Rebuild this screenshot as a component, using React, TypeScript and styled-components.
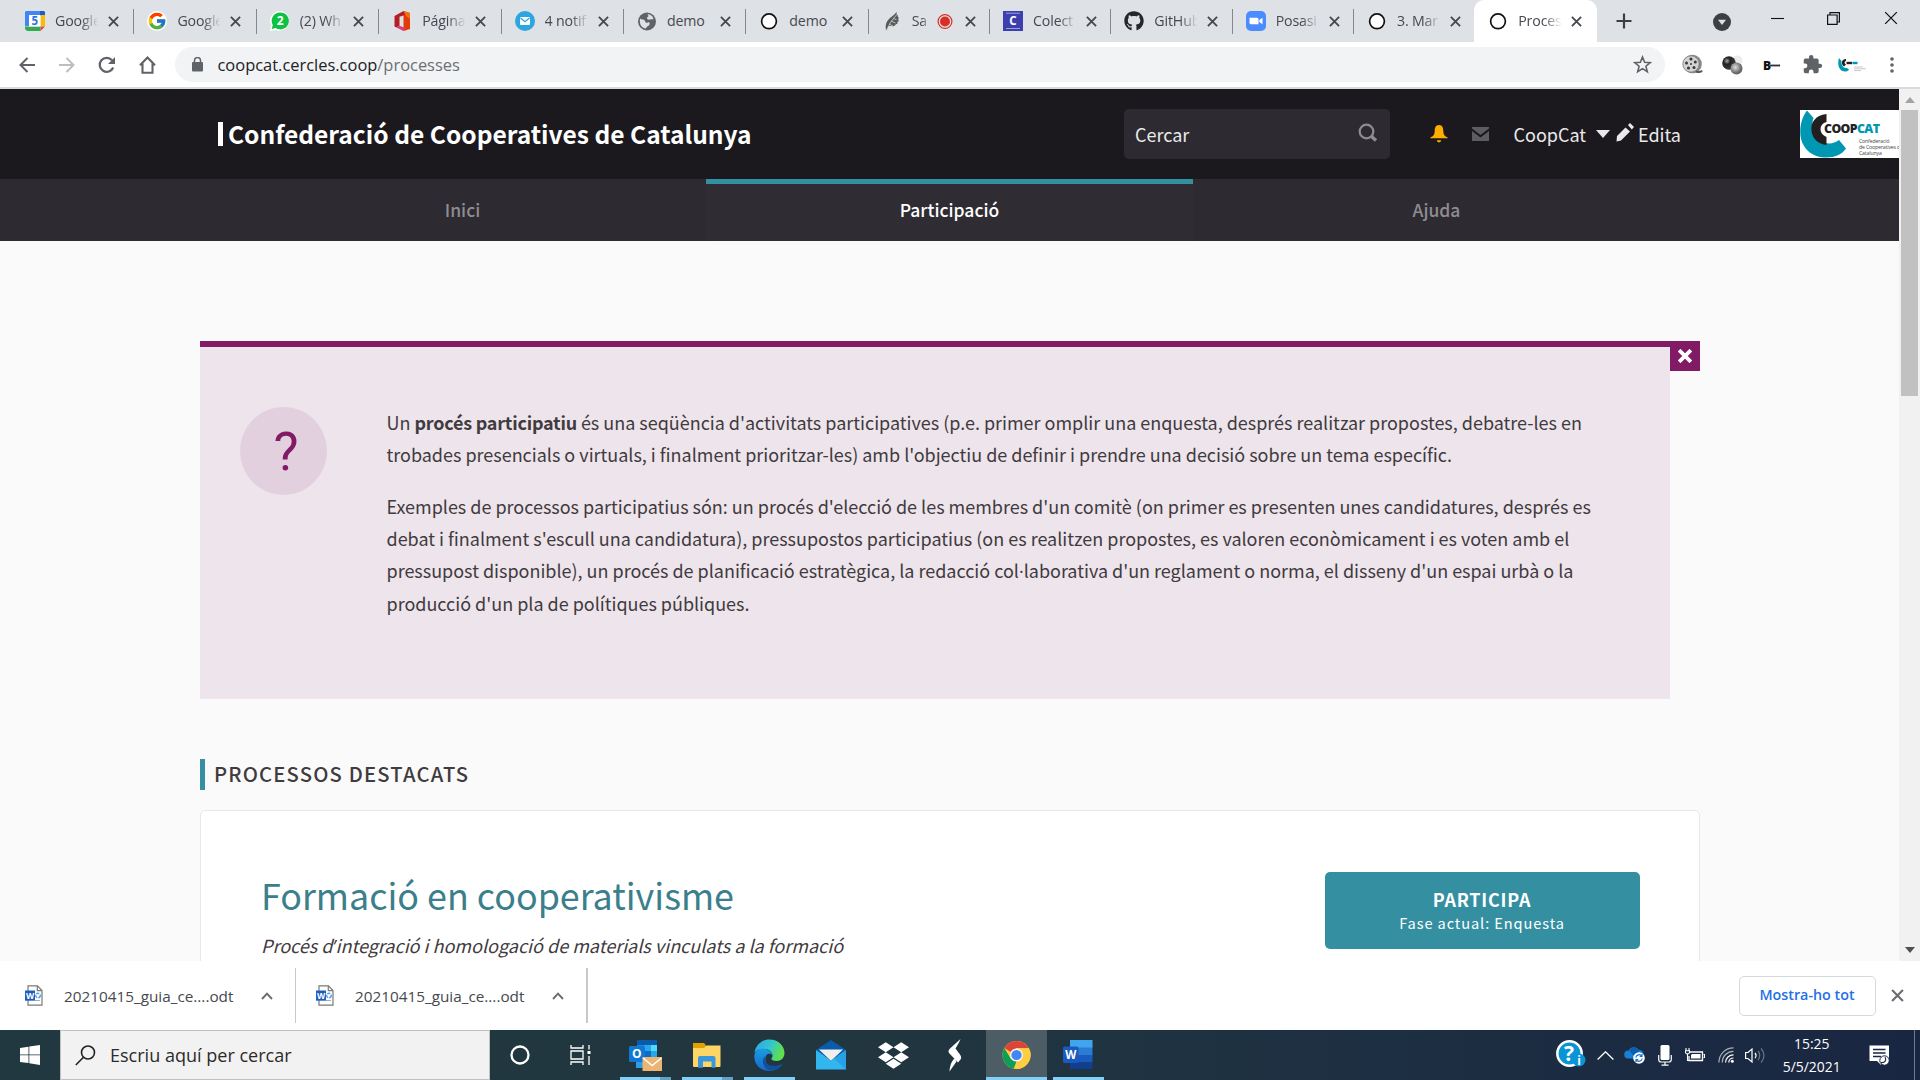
import React from "react";
import styled, { createGlobalStyle, css } from "styled-components";
import { FcGoogle } from "react-icons/fc";
import { FaDropbox, FaGithub } from "react-icons/fa";

const ui = `"Open Sans", "Noto Sans", sans-serif`;
const site = `"Noto Sans CJK SC", "Noto Sans", sans-serif`;
const teal = "#3490a0";
const plum = "#821b66";

const GlobalStyle = createGlobalStyle`
  body { margin: 0; overflow: hidden; }
  * { box-sizing: border-box; }
  svg { display: block; flex: none; }
`;

const Screen = styled.div`
  width: 1920px;
  height: 1080px;
  display: flex;
  flex-direction: column;
  overflow: hidden;
  font-family: ${ui};
`;

/* ---------- tab strip ---------- */
const TabStrip = styled.div`
  height: 42px;
  background: #dee1e6;
  display: flex;
  padding-left: 11px;
`;
const Tab = styled.div<{ $w: number; $active?: boolean; $last?: boolean }>`
  position: relative;
  width: ${(p) => p.$w}px;
  height: 42px;
  padding-left: 14px;
  display: flex;
  align-items: center;
  background: ${(p) => (p.$active ? "#fff" : "transparent")};
  border-radius: ${(p) => (p.$active ? "10px 10px 0 0" : "0")};
  &::after {
    content: "";
    display: ${(p) => (p.$active || p.$last ? "none" : "block")};
    position: absolute;
    right: -1px;
    top: 9px;
    width: 1px;
    height: 25px;
    background: #84878b;
  }
`;
const Favicon = styled.div`
  width: 20px;
  height: 42px;
  flex: none;
  display: flex;
  align-items: center;
  justify-content: center;
`;
const TabTitle = styled.div<{ $w: number; $fade: boolean }>`
  margin-left: 10px;
  width: ${(p) => p.$w}px;
  overflow: hidden;
  white-space: nowrap;
  font-size: 14.2px;
  line-height: 24px;
  letter-spacing: -0.15px;
  color: #45494e;
  ${(p) => p.$fade && css`mask-image: linear-gradient(to right, #000 60%, transparent 102%);`}
`;
const RecordBadge = styled(Favicon)`
  margin-left: 6px;
`;
const TabClose = styled.div`
  position: absolute;
  left: 97px;
  top: 16px;
`;
const NewTab = styled.div`
  width: 54px;
  display: flex;
  align-items: center;
  justify-content: center;
`;
const WindowControls = styled.div`
  margin-left: auto;
  display: flex;
  height: 37px;
`;
const WindowButton = styled.div<{ $w: number; $down?: boolean }>`
  width: ${(p) => p.$w}px;
  height: ${(p) => (p.$down ? 43 : 36)}px;
  display: flex;
  align-items: center;
  justify-content: center;
`;

/* ---------- address toolbar ---------- */
const Toolbar = styled.div`
  height: 47px;
  background: #fff;
  border-bottom: 2px solid #dadbde;
  display: flex;
  align-items: center;
  padding-left: 7px;
`;
const ToolButton = styled.div`
  width: 40px;
  height: 40px;
  display: flex;
  align-items: center;
  justify-content: center;
`;
const AddressBar = styled.div`
  margin-left: 8px;
  margin-right: 7px;
  width: 1490px;
  height: 35px;
  border-radius: 18px;
  background: #f1f3f4;
  display: flex;
  align-items: center;
  padding: 0 13px 0 17px;
`;
const Url = styled.div`
  flex: 1;
  margin-left: 14.5px;
  font-size: 16.45px;
  color: #202124;
  white-space: nowrap;
  span { color: #6b6f74; }
`;

/* ---------- page ---------- */
const Viewport = styled.div`
  height: 872px;
  display: flex;
`;
const Page = styled.div`
  width: 1899px;
  height: 872px;
  overflow: hidden;
  background: #fafafa;
  font-family: ${site};
  color: #3f3b3e;
`;
const Header = styled.header`
  height: 90px;
  background: #1b191e;
  display: flex;
  align-items: center;
  padding-left: 218px;
  color: #e9e9ea;
  font-size: 18px;
  line-height: 24px;
`;
const SiteTitle = styled.div`
  width: 906px;
  display: flex;
  align-items: center;
  gap: 5px;
  font-size: 24.55px;
  font-weight: 700;
  color: #fff;
  white-space: nowrap;
`;
const TitleBar = styled.span`
  width: 5px;
  height: 24px;
  background: #fff;
`;
const SearchBox = styled.div`
  width: 266px;
  height: 50px;
  border-radius: 5px;
  background: #2d2a31;
  display: flex;
  align-items: center;
  justify-content: space-between;
  padding: 0 12px 0 11px;
`;
const HeaderItem = styled.div<{ $gap: number; $w: number }>`
  margin-left: ${(p) => p.$gap}px;
  width: ${(p) => p.$w}px;
  padding-bottom: 1px;
  white-space: nowrap;
`;
const Brand = styled.div`
  margin-left: auto;
  width: 99px;
  height: 48px;
  background: #fff;
  display: flex;
`;
const BrandText = styled.div`
  padding-top: 12px;
  margin-left: -26px;
  width: 75px;
  overflow: hidden;
  white-space: nowrap;
`;
const BrandName = styled.div`
  font: 800 12.3px/14px ${ui};
  letter-spacing: -0.6px;
  color: #222;
  span { color: #0097b2; }
`;
const BrandNote = styled.div`
  margin: 3px 0 0 35px;
  font: 5.2px/5.8px ${ui};
  letter-spacing: -0.15px;
  color: #444;
`;
const Nav = styled.nav`
  height: 62px;
  background: #2d2a31;
  padding: 0 219px;
  display: flex;
`;
const NavLink = styled.div<{ $active?: boolean }>`
  flex: 1;
  border-top: 5px solid ${(p) => (p.$active ? teal : "transparent")};
  background: ${(p) => (p.$active ? "#302c34" : "transparent")};
  background-clip: padding-box;
  padding-bottom: 7px;
  display: flex;
  align-items: center;
  justify-content: center;
  font-size: 17.5px;
  font-weight: 500;
  color: ${(p) => (p.$active ? "#fff" : "#8f8d92")};
`;
const Main = styled.main`
  padding: 100px 199px 0 200px;
`;
const Callout = styled.section`
  display: flex;
  align-items: flex-start;
  height: 358px;
  margin-bottom: 60px;
`;
const CalloutBody = styled.div`
  width: 1470px;
  height: 358px;
  border-top: 6px solid ${plum};
  background: #eee4eb;
  padding: 60px 0 0 40px;
  display: flex;
  align-items: flex-start;
`;
const CalloutClose = styled.div`
  width: 30px;
  height: 30px;
  background: ${plum};
  display: flex;
  align-items: center;
  justify-content: center;
  padding-right: 1px;
`;
const HelpCircle = styled.div`
  width: 87px;
  height: 88px;
  border-radius: 50%;
  background: #e2d0de;
  color: ${plum};
  display: flex;
  justify-content: center;
  font-family: Roboto, sans-serif;
  font-size: 53px;
  line-height: 90px;
  padding-left: 5px;
`;
const CalloutText = styled.div`
  margin: -1px 0 0 59.5px;
  font-size: 17.98px;
  line-height: 32px;
  white-space: nowrap;
  p { margin: 0 0 20px; }
  b { font-weight: 700; letter-spacing: -0.22px; }
  span { font-family: "Open Sans", sans-serif; }
`;
const SectionHeading = styled.h3`
  margin: 0 0 20px;
  height: 31px;
  border-left: 5px solid ${teal};
  padding-left: 9px;
  font-size: 20.2px;
  line-height: 29px;
  font-weight: 500;
  letter-spacing: 1.18px;
`;
const Card = styled.article`
  height: 400px;
  border: 1px solid #e8e8e8;
  border-radius: 5px;
  background: #fff;
  padding: 61px 59px 0 60px;
  display: flex;
  justify-content: space-between;
  align-items: flex-start;
`;
const CardTitle = styled.h2`
  margin: 0;
  font-size: 35.85px;
  line-height: 44px;
  font-weight: 400;
  color: #3a7f8b;
`;
const CardLead = styled.p`
  margin: 13px 0 0;
  font-size: 18px;
  line-height: 32px;
  font-style: italic;
  white-space: nowrap;
  span { font-family: "Open Sans", sans-serif; }
`;
const CardButton = styled.div`
  width: 315px;
  height: 77px;
  border-radius: 5px;
  background: ${teal};
  color: #fff;
  text-align: center;
  padding: 16px 1px 0 0;
`;
const ButtonTitle = styled.div`
  font-size: 17.9px;
  line-height: 23px;
  font-weight: 700;
  letter-spacing: 0.8px;
`;
const ButtonNote = styled.div`
  font-size: 14.6px;
  line-height: 23px;
  letter-spacing: 0.9px;
`;
const Scrollbar = styled.div`
  width: 21px;
  background: #f1f1f1;
  display: flex;
  flex-direction: column;
  align-items: center;
  justify-content: space-between;
`;
const ScrollTop = styled.div`
  display: flex;
  flex-direction: column;
  align-items: center;
`;
const ScrollArrow = styled.div<{ $h: number }>`
  height: ${(p) => p.$h}px;
  display: flex;
  align-items: center;
`;
const ScrollThumb = styled.div`
  width: 17px;
  height: 286px;
  background: #c1c1c1;
`;

/* ---------- downloads shelf ---------- */
const Shelf = styled.div`
  height: 69px;
  background: #fff;
  display: flex;
  align-items: center;
`;
const Download = styled.div<{ $gap: number; $w: number; $edge: number }>`
  margin-left: ${(p) => p.$gap}px;
  width: ${(p) => p.$w}px;
  height: 55px;
  border-right: ${(p) => p.$edge}px solid #c8c9cb;
  display: flex;
  align-items: center;
  color: #45494e;
`;
const DownloadName = styled.div`
  width: 170px;
  margin: 0 27px 0 21px;
  font-size: 15.3px;
  white-space: nowrap;
`;
const ShowAll = styled.div`
  margin-left: auto;
  width: 137px;
  height: 40px;
  border: 1px solid #d5d8dc;
  border-radius: 5px;
  display: flex;
  align-items: center;
  justify-content: center;
  padding: 0 1px 2px 0;
  font-size: 14.3px;
  font-weight: 600;
  color: #2470e6;
`;
const ShelfClose = styled.div`
  width: 44px;
  padding-right: 1px;
  display: flex;
  justify-content: center;
`;

/* ---------- taskbar ---------- */
const Taskbar = styled.div`
  height: 50px;
  background: linear-gradient(90deg, #213840 0%, #21363f 45%, #1d2f42 72%, #192642 100%);
  display: flex;
  color: #fff;
`;
const TaskSlot = styled.div<{ $w: number; $active?: boolean }>`
  width: ${(p) => p.$w}px;
  height: 50px;
  flex: none;
  display: flex;
  flex-direction: column;
  align-items: center;
  background: ${(p) => (p.$active ? "#4c5d66" : "transparent")};
`;
const TaskIcon = styled.div`
  height: 47px;
  padding-top: 3px;
  display: flex;
  align-items: center;
`;
const Running = styled.div<{ $w: number; $multi?: boolean }>`
  width: ${(p) => p.$w}px;
  height: 3px;
  background: ${(p) => (p.$multi ? "linear-gradient(90deg, #7fd1fa 0 40px, #62a2c4 40px)" : "#7fd1fa")};
`;
const TaskSearch = styled.div`
  width: 430px;
  height: 50px;
  background: #f2f2f2;
  border: 1px solid #c0c1c2;
  display: flex;
  align-items: center;
  padding-left: 14px;
  gap: 14px;
  font-size: 18.05px;
  color: #2b2b2b;
`;
const Tray = styled.div`
  margin-left: auto;
  display: flex;
  align-items: center;
`;
const TrayItem = styled.div<{ $w: number }>`
  width: ${(p) => p.$w}px;
  height: 50px;
  display: flex;
  align-items: center;
  justify-content: center;
`;
const Clock = styled.div`
  width: 84px;
  text-align: center;
  font-size: 13.9px;
  line-height: 23px;
`;
const ShowDesktop = styled.div`
  width: 6px;
  height: 50px;
  border-left: 1px solid #6f7a8c;
`;

/* ---------- drawings ---------- */
const Cross = ({ s, w, c = "#45494d" }: { s: number; w: number; c?: string }) => (
  <svg width={s} height={s} viewBox="0 0 12 12" stroke={c} strokeWidth={w}>
    <path d="M1 1 11 11M11 1 1 11" />
  </svg>
);

const Ring = () => (
  <svg width="20" height="20" viewBox="0 0 20 20">
    <circle cx="10" cy="10.3" r="7.4" fill="#fff" stroke="#111" strokeWidth="1.7" />
  </svg>
);

const Calendar = () => (
  <svg width="20" height="20" viewBox="0 0 20 20">
    <path fill="#4285f4" d="M1 0h14v4H4v11H0V1z" />
    <path fill="#1a5fd0" d="M15 0h4l1 1v4h-5z" />
    <path fill="#fbbc04" d="M15.500 4H20v11h-4.500z" />
    <path fill="#34a853" d="M1 15.500h14.500V20H2L0 18v-2.500z" />
    <path fill="#ea4335" d="M15.500 15.500H20L15.500 20z" />
    <path fill="#fff" d="M4 4h11.500v11.500H4z" />
    <text x="9.700" y="13.800" fontFamily="Open Sans" fontWeight="700" fontSize="11.500" fill="#2f75e8" textAnchor="middle">5</text>
  </svg>
);

const WhatsApp = () => (
  <svg width="20" height="20" viewBox="0 0 20 20">
    <path fill="#fff" d="M10 0a9.800 9.800 0 0 0-8.800 14.500L0 20l5.300-1.300A9.800 9.800 0 1 0 10 0z" />
    <path fill="#0fc143" d="M10.200 1.400a8.500 8.500 0 0 0-7.400 12.700L1.700 18l4-1a8.500 8.500 0 1 0 4.500-15.600z" />
    <text x="10.300" y="14.300" fontFamily="Open Sans" fontWeight="700" fontSize="12" fill="#fff" textAnchor="middle">2</text>
  </svg>
);

const Office = () => (
  <svg width="20" height="20" viewBox="0 0 20 20">
    <path fill="#e23b0a" d="M11.500 0 18 2v16l-6.500 2z" />
    <path fill="#f0700e" d="M11.500 0 18 2v6l-4-3z" />
    <path fill="#b31d24" d="M2.500 5 11.500 0l1.500 4-5.500 1.800v9L4.500 16.500l-2-1z" />
    <path fill="#d93a7a" d="M4.500 16.500 7.500 14.800 13 17v1l-1.500 2z" />
  </svg>
);

const MailDot = () => (
  <svg width="20" height="20" viewBox="0 0 20 20">
    <circle cx="10" cy="10" r="10" fill="#2ba6e0" />
    <rect x="5" y="6" width="10" height="8" rx="1" fill="#fff" />
    <path d="m5.500 7 4.500 3.700L14.500 7" fill="none" stroke="#2ba6e0" strokeWidth="1.200" />
  </svg>
);

const Globe = () => (
  <svg width="20" height="20" viewBox="0 0 20 20">
    <circle cx="10" cy="10.500" r="9" fill="#5f6368" />
    <path fill="#dee1e6" d="M3 7.500c2 1.500 4.500.5 5 2.500s1.500 2 3 1.500 2 .5 1.500 2-3 1.500-3.500 4c-3.500-.3-7-3-6-10zM10.500 3c3 .5 5 2 6 4.500-1 1.500-2 .5-3.500 1s-3-.2-3-1.500 1.500-1 1.500-2-1-1-1-2z" />
  </svg>
);

const Feather = () => (
  <svg width="20" height="20" viewBox="0 0 20 20">
    <path fill="#5a5a5a" d="M4 19.500c-1-5 0-8.500 3-11.500 2-2.200 4-2.500 7.500-7 .5 3-.3 4 1.500 3-.2 2-.5 2.500 1 2.500-1 2-1 3 0 3.500-2 1-2 2-1.500 3-2.500 0-2 1.500-3.500 2-2.500.7-4-.5-5.500.5z" />
    <path d="M5 19C7 13 10 9 14.500 4M7 13l4 2M9 10l4.500 2M11 7.500l3.500 1" stroke="#cfd1d4" strokeWidth=".8" fill="none" />
  </svg>
);

const Record = () => (
  <svg width="16" height="18" viewBox="0 0 16 18">
    <circle cx="8" cy="9.500" r="6.900" fill="none" stroke="#d93025" strokeWidth="1.200" />
    <circle cx="8" cy="9.500" r="5" fill="#d93025" />
  </svg>
);

const Colectivo = () => (
  <svg width="20" height="20" viewBox="0 0 20 20">
    <path fill="#3d3fae" d="M0 0h20v20H0z" />
    <path d="M3 2.200h14M3 17.500h14" stroke="#a6a8e6" strokeWidth=".9" />
    <text x="10" y="14.200" fontFamily="Open Sans" fontWeight="700" fontSize="11.500" fill="#fff" textAnchor="middle">C</text>
  </svg>
);

const Zoom = () => (
  <svg width="20" height="20" viewBox="0 0 20 20">
    <rect width="20" height="20" rx="5" fill="#4a8cff" />
    <path fill="#fff" d="M3.500 6.800h7.500a1.500 1.500 0 0 1 1.500 1.500v5H5a1.500 1.500 0 0 1-1.500-1.500zM13.300 9l3.200-2.200v6.400L13.300 11z" />
  </svg>
);

const Reel = () => (
  <svg width="21" height="21" viewBox="0 0 21 21">
    <circle cx="10.500" cy="10" r="9.300" fill="#888" />
    <circle cx="9" cy="10" r="8.200" fill="#d2d2d2" stroke="#777" strokeWidth=".8" />
    <g fill="#3a3a3a">
      <circle cx="9" cy="10" r="1" /><circle cx="9" cy="5" r="1.600" /><circle cx="13.300" cy="8" r="1.500" />
      <circle cx="12" cy="13.500" r="1.500" /><circle cx="6.500" cy="14" r="1.600" /><circle cx="4.500" cy="9" r="1.500" />
    </g>
    <path d="M14 17.500c3 1 5 1 6-1" stroke="#555" strokeWidth="2" fill="none" />
  </svg>
);

const Balls = () => (
  <svg width="21" height="20" viewBox="0 0 21 20">
    <defs>
      <radialGradient id="bk" cx=".35" cy=".35"><stop offset="0" stopColor="#aaa" /><stop offset=".5" stopColor="#222" /><stop offset="1" stopColor="#333" /></radialGradient>
      <radialGradient id="gy" cx=".4" cy=".4"><stop offset="0" stopColor="#ddd" /><stop offset="1" stopColor="#666" /></radialGradient>
    </defs>
    <circle cx="15.500" cy="5.500" r="5" fill="#ececec" />
    <circle cx="7" cy="8" r="6.800" fill="url(#bk)" />
    <circle cx="14.500" cy="13.500" r="6" fill="url(#gy)" />
  </svg>
);

const Bmark = () => (
  <svg width="18" height="12" viewBox="0 0 18 12">
    <text x="0" y="10.500" fontFamily="Open Sans" fontWeight="800" fontSize="12" fill="#111">B</text>
    <path d="M7 6.500h10" stroke="#333" strokeWidth="1.800" />
  </svg>
);

const Puzzle = () => (
  <svg width="21" height="21" viewBox="0 0 24 24">
    <path fill="#5f6368" d="M20.500 11H19V7a2 2 0 0 0-2-2h-4V3.500a2.500 2.500 0 0 0-5 0V5H4a2 2 0 0 0-2 2v3.800h1.500a2.700 2.700 0 0 1 0 5.400H2V20a2 2 0 0 0 2 2h3.800v-1.500a2.700 2.700 0 0 1 5.400 0V22H17a2 2 0 0 0 2-2v-4h1.500a2.500 2.500 0 0 0 0-5z" />
  </svg>
);

const CoopMini = () => (
  <svg width="28" height="14" viewBox="0 0 28 14">
    <path fill="#0097b2" d="M1 0c-2 7 0 13 6 13.500 2 0 3-.5 4-2L9 10C5 10 3 7 3.500 3z" />
    <path fill="#222" d="M8 1C3.500 1 2.500 6 6 8.500L8 6.500C6 5.500 6.500 3.500 8 3z" />
    <path d="M8.500 5h5.500" stroke="#222" strokeWidth="2.400" />
    <path d="M14.500 5h5" stroke="#0097b2" strokeWidth="2.400" />
    <path d="M16 9h9M16 10.800h12M16 12.600h7" stroke="#bbb" strokeWidth=".8" />
  </svg>
);

const CoopLogo = () => (
  <svg width="50" height="48" viewBox="0 0 50 48">
    <path fill="#0097b2" d="M7 .5C1 8-1 20 1 29c3 11 12 18.500 25 18.500 9 0 16-3 20-9L39 30c-9 7-22 3-26-10C11.500 12 13.500 8 13.500 8z" />
    <path fill="#231f20" d="M26.500 4C15 5 10.500 13 11.500 21c1 8 7 13 15 14v-8c-8-3-8-13 0-15z" />
  </svg>
);

const WordDoc = () => (
  <svg width="18" height="21" viewBox="0 0 18 21">
    <path d="M3 .8h9.500L17 5.500v14.700H3z" fill="#fff" stroke="#7a7a7a" strokeWidth="1.200" />
    <path d="M12.300.8v4.900H17" fill="none" stroke="#7a7a7a" strokeWidth="1.200" />
    <circle cx="13" cy="10.500" r="2.300" fill="none" stroke="#4aa3ee" strokeWidth="1.400" strokeDasharray="3 1" />
    <path d="M10 15.500h5" stroke="#aaa" />
    <path fill="#1f5dbf" d="M0 5.500h10v10.200H0z" />
    <text x="5" y="13.600" fontFamily="Open Sans" fontWeight="700" fontSize="8.500" fill="#fff" textAnchor="middle">W</text>
  </svg>
);

const ChevronUp = () => (
  <svg width="12" height="8" viewBox="0 0 12 8">
    <path d="m1 7 5-5.400L11 7" fill="none" stroke="#6a6e72" strokeWidth="1.900" />
  </svg>
);

const Outlook = () => (
  <svg width="33" height="32" viewBox="0 0 33 32">
    <path fill="#0a5aa8" d="M8 1h20v7H8z" />
    <path fill="#1587dc" d="M8 6h7v9H8z" /><path fill="#28a8ea" d="M15 6h7v6h-7z" /><path fill="#50d9ff" d="M22 6h6v6h-6z" />
    <path fill="#0f6cc0" d="M15 12h7v7h-7z" /><path fill="#28a8ea" d="M22 12h6v7h-6z" /><path fill="#2a9fe5" d="M7 20h9v9H7z" />
    <rect y="7" width="16" height="16" rx="1.500" fill="#0f78d4" />
    <text x="7.700" y="19.200" fontFamily="Open Sans" fontWeight="700" fontSize="12" fill="#fff" textAnchor="middle">O</text>
    <path fill="#ecb573" d="M13.500 18H33v14.500H13.500z" />
    <path d="m14 19 9.200 7.500L32.500 19" fill="none" stroke="#fff" strokeWidth="1.400" />
  </svg>
);

const Folder = () => (
  <svg width="28" height="25" viewBox="0 0 28 25">
    <path fill="#e0a200" d="M0 0h11l2 2.500V8H0z" />
    <path fill="#ffd666" d="M0 5h11l2.500-2.500H27.500V23a1 1 0 0 1-1 1H1a1 1 0 0 1-1-1z" />
    <path fill="#3b97dc" d="M8 13h12.500a2 2 0 0 1 2 2v9.800h-4V18.500h-8.500v6.300H5V15a2 2 0 0 1 2-2z" />
  </svg>
);

const Edge = () => (
  <svg width="31" height="32" viewBox="0 0 31 32">
    <defs>
      <linearGradient id="ea" x1="0" y1="0" x2="1" y2=".3"><stop offset="0" stopColor="#2aa6e6" /><stop offset=".55" stopColor="#32c5d0" /><stop offset="1" stopColor="#5fe04c" /></linearGradient>
      <linearGradient id="eb" x1="0" y1="0" x2="0" y2="1"><stop offset="0" stopColor="#1b9de2" /><stop offset="1" stopColor="#1468c8" /></linearGradient>
    </defs>
    <path fill="url(#ea)" d="M.5 14C1.500 6 7.500.5 15.500.5 24 .5 30.500 6.500 30.500 14c0 5-3.500 8-8 8-4 0-5.500-1.500-5-2.700C20 17 18 10.500 11 10 5 9.500 1.500 12 .5 14z" />
    <path fill="url(#eb)" d="M.3 17C.5 12 5 9.300 10 9.700c5 .4 8 3.500 8.300 6.300-3-2.500-7-1-7 4 0 6 6 10 13 9-8 6-24 3-24-12z" />
    <path fill="#12509b" d="M11 17c-2 8 6 13 18 7.500C25 31 19 32.500 14 31 9 28 7 21 11 17z" />
  </svg>
);

const Mail = () => (
  <svg width="30" height="30" viewBox="0 0 30 30">
    <path fill="#0a5cab" d="M0 10 15 0l15 10v6H0z" />
    <path fill="#f0f0f0" d="M3 9.500h24L15 21z" />
    <path fill="#33b5ee" d="m0 10 15 10.500L30 10v19.500H0z" />
    <path fill="#1d90e0" d="M18 18.500 30 10v19.500z" opacity=".55" />
  </svg>
);

const SLogo = () => (
  <svg width="14" height="33" viewBox="0 0 14 33">
    <path fill="#fff" d="M12.500 0 2 9.500C0 11.500 0 13 1.500 14.500L10 23.500l2.500-3c1-1.500.8-3-.2-4.500L7.500 9.500C9 7 11 4 12.500 0zM6.500 19.500 8.500 22.500 1.500 32.500C1.800 28 3 22.500 6.500 19.500z" />
  </svg>
);

const Chrome = () => (
  <svg width="29" height="30" viewBox="0 0 30 30">
    <circle cx="15" cy="15" r="14.500" fill="#ffcd40" />
    <path fill="#db4437" d="M2.400 7.800A14.500 14.500 0 0 1 27.600 7.800H15L9 12z" />
    <path fill="#0f9d58" d="M2.400 7.800 9 18.500l6 3.300-3 7.500A14.500 14.500 0 0 1 2.400 7.800z" />
    <path fill="#ffcd40" d="M27.600 7.800H15l6.300 10.500-7 11.200A14.500 14.500 0 0 0 27.600 7.800z" />
    <circle cx="15" cy="15" r="6.800" fill="#f1f1f1" />
    <circle cx="15" cy="15" r="5.300" fill="#4285f4" />
  </svg>
);

const Word = () => (
  <svg width="30" height="30" viewBox="0 0 30 30">
    <path fill="#41a5ee" d="M7 0h22.500v8H7z" /><path fill="#2b7cd3" d="M7 7.500h22.500V15H7z" />
    <path fill="#185abd" d="M7 15h22.500v7.500H7z" /><path fill="#103f91" d="M7 22.500h22.500V29H7z" />
    <rect y="6.500" width="15.500" height="16.500" rx="1.500" fill="#185abd" />
    <text x="7.700" y="19" fontFamily="Open Sans" fontWeight="700" fontSize="11.500" fill="#fff" textAnchor="middle">W</text>
  </svg>
);

const HelpBadge = () => (
  <svg width="30" height="30" viewBox="0 0 30 30">
    <circle cx="13.500" cy="13.500" r="12.200" fill="#0a94d6" stroke="#fff" strokeWidth="2.500" />
    <text x="13" y="21" fontFamily="Open Sans" fontWeight="700" fontSize="21" fill="#fff" textAnchor="middle">?</text>
    <circle cx="23" cy="20" r="6.500" fill="#0a94d6" />
    <text x="23" y="24.500" fontFamily="Open Sans" fontWeight="700" fontSize="12" fill="#fff" textAnchor="middle">i</text>
  </svg>
);

const Cloud = () => (
  <svg width="22" height="18" viewBox="0 0 22 18">
    <path fill="#1780d6" d="M4 12.500a4 4 0 0 1 .5-8A6 6 0 0 1 15 4c3 0 4.500 2 4.500 4.500v4z" />
    <path fill="#0c5fb0" d="M5 4.500A6 6 0 0 1 15 4c1 2-4 6-5 6z" />
    <circle cx="15" cy="12" r="5.800" fill="#fff" />
    <path d="M11.800 11.500a3.400 3.400 0 0 1 6-1.500m.4 2.500a3.400 3.400 0 0 1-6 1.500M18 8v2.300h-2.300M12 16v-2.300h2.300" fill="none" stroke="#1c74d0" strokeWidth="1.200" />
  </svg>
);

type TabInfo = { icon: React.ReactNode; title: string; width: number; recording?: boolean };
const tabs: TabInfo[] = [
  { icon: <Calendar />, title: "Google", width: 122.4 },
  { icon: <FcGoogle size={20} style={{ background: "#fff", borderRadius: "50%" }} />, title: "Google", width: 122.4 },
  { icon: <WhatsApp />, title: "(2) Wh", width: 122.4 },
  { icon: <Office />, title: "Página", width: 122.4 },
  { icon: <MailDot />, title: "4 notif", width: 122.4 },
  { icon: <Globe />, title: "demo", width: 122.4 },
  { icon: <Ring />, title: "demo", width: 122.4 },
  { icon: <Feather />, title: "Sa", width: 121.3, recording: true },
  { icon: <Colectivo />, title: "Colect", width: 121.3 },
  { icon: <FaGithub size={20} color="#24272b" />, title: "GitHub", width: 121.3 },
  { icon: <Zoom />, title: "Posasi", width: 121.3 },
  { icon: <Ring />, title: "3. Mar", width: 121.3 },
  { icon: <Ring />, title: "Proces", width: 122.5 },
];

const downloads = [
  { name: "20210415_guia_ce....odt", gap: 25, width: 271, edge: 1 },
  { name: "20210415_guia_ce....odt", gap: 20, width: 272, edge: 2 },
];

export default function App() {
  return (
    <Screen>
      <GlobalStyle />
      <TabStrip>
        {tabs.map((t, i) => (
          <Tab key={i} $w={t.width} $active={i === 12} $last={i === 11}>
            <Favicon>{t.icon}</Favicon>
            <TabTitle $w={t.recording ? 17 : 43} $fade={t.title !== "demo"}>{t.title}</TabTitle>
            {t.recording && <RecordBadge><Record /></RecordBadge>}
            <TabClose><Cross s={11} w={2} /></TabClose>
          </Tab>
        ))}
        <NewTab>
          <svg width="16" height="16" viewBox="0 0 16 16"><path d="M8 .5v15M.5 8h15" stroke="#3c4043" strokeWidth="2.200" /></svg>
        </NewTab>
        <WindowControls>
          <WindowButton $w={55} $down>
            <svg width="18" height="18" viewBox="0 0 18 18"><circle cx="9" cy="9" r="9" fill="#3c4043" /><path d="M5 6.800h8L9 12z" fill="#dee1e6" /></svg>
          </WindowButton>
          <WindowButton $w={56}>
            <svg width="13" height="3" viewBox="0 0 13 3"><path d="M0 1.500h13" stroke="#111" strokeWidth="1.100" /></svg>
          </WindowButton>
          <WindowButton $w={57}>
            <svg width="13" height="13" viewBox="0 0 13 13" fill="none" stroke="#111" strokeWidth="1.200"><path d="M.6 3h9.500v9.400H.6zM3 3V.6h9.400V10h-2.300" /></svg>
          </WindowButton>
          <WindowButton $w={58}><Cross s={14} w={1.1} c="#111" /></WindowButton>
        </WindowControls>
      </TabStrip>

      <Toolbar>
        <ToolButton>
          <svg width="16" height="16" viewBox="0 0 16 16" fill="none" stroke="#5f6368" strokeWidth="2"><path d="M16 8H1.500M8.500 1l-7 7 7 7" /></svg>
        </ToolButton>
        <ToolButton>
          <svg width="16" height="16" viewBox="0 0 16 16" fill="none" stroke="#bcbec1" strokeWidth="2"><path d="M0 8h14.500M7.500 1l7 7-7 7" /></svg>
        </ToolButton>
        <ToolButton>
          <svg width="18" height="18" viewBox="0 0 18 18"><path d="M15.200 11.500A7 7 0 1 1 14 4.200" fill="none" stroke="#5f6368" strokeWidth="2.200" /><path d="M17 1v7h-7z" fill="#5f6368" /></svg>
        </ToolButton>
        <ToolButton>
          <svg width="17" height="18" viewBox="0 0 17 18" fill="none" stroke="#5f6368" strokeWidth="2.100"><path d="M1 9.300 8.500 1.600 16 9.300M3.500 7.500v9.300h3.200M13.500 7.500v9.300h-3.200M3.500 16.700h10" /></svg>
        </ToolButton>
        <AddressBar>
          <svg width="11" height="15" viewBox="0 0 11 15"><rect y="5" width="11" height="9.500" rx="1" fill="#5f6368" /><path d="M2.500 6V3.500a3 3 0 0 1 6 0V6" fill="none" stroke="#5f6368" strokeWidth="1.500" /></svg>
          <Url>coopcat.cercles.coop<span>/processes</span></Url>
          <svg width="19" height="19" viewBox="0 0 24 24" fill="none" stroke="#5f6368" strokeWidth="2"><path d="m12 2.500 2.700 6.600 7.100.5-5.500 4.600 1.800 7-6.100-3.900-6.100 3.900 1.800-7L2.200 9.600l7.100-.5z" /></svg>
        </AddressBar>
        <ToolButton><Reel /></ToolButton>
        <ToolButton><Balls /></ToolButton>
        <ToolButton><Bmark /></ToolButton>
        <ToolButton><Puzzle /></ToolButton>
        <ToolButton><CoopMini /></ToolButton>
        <ToolButton>
          <svg width="4" height="16" viewBox="0 0 4 16" fill="#5f6368"><circle cx="2" cy="2" r="1.800" /><circle cx="2" cy="8" r="1.800" /><circle cx="2" cy="14" r="1.800" /></svg>
        </ToolButton>
      </Toolbar>

      <Viewport>
        <Page>
          <Header>
            <SiteTitle><TitleBar />Confederació de Cooperatives de Catalunya</SiteTitle>
            <SearchBox>
              Cercar
              <svg width="20" height="22" viewBox="0 0 20 22" fill="none" stroke="#8e8c92"><circle cx="8.500" cy="8.500" r="6.800" strokeWidth="2.200" /><path d="m13.500 13.500 4.500 4" strokeWidth="3.400" /></svg>
            </SearchBox>
            <HeaderItem $gap={40} $w={18}>
              <svg width="18" height="18" viewBox="0 0 18 19" fill="#ffae00"><path d="M9 0c3.500 0 4.500 3 4.500 6 0 4 1.500 6 4.500 7v1H0v-1c3-1 4.500-3 4.500-7C4.500 3 5.500 0 9 0zM6.800 16h4.400c0 3-4.400 3-4.400 0z" /></svg>
            </HeaderItem>
            <HeaderItem $gap={24} $w={17}>
              <svg width="17" height="14" viewBox="0 0 17 14" fill="#5d5c61"><path d="M0 0h17v1.500L8.500 8 0 1.500zM0 4l8.500 6.500L17 4v10H0z" /></svg>
            </HeaderItem>
            <HeaderItem $gap={24.500} $w={73}>CoopCat</HeaderItem>
            <HeaderItem $gap={9} $w={14}>
              <svg width="14" height="9" viewBox="0 0 14 9" fill="#e9e9ea" ><path d="M0 1h14L7 9z" /></svg>
            </HeaderItem>
            <HeaderItem $gap={6.500} $w={18}>
              <svg width="18" height="21" viewBox="0 0 18 21" fill="#e9e9ea"><path d="m9.500 4.500 4.500 4L5 17.500.5 18.500 1 13zM12 2l2-2 4 4-2.200 2.500z" /></svg>
            </HeaderItem>
            <HeaderItem $gap={4} $w={44}>Edita</HeaderItem>
            <Brand>
              <CoopLogo />
              <BrandText>
                <BrandName>COOP<span>CAT</span></BrandName>
                <BrandNote>Confederació<br />de Cooperatives de<br />Catalunya</BrandNote>
              </BrandText>
            </Brand>
          </Header>
          <Nav>
            <NavLink>Inici</NavLink>
            <NavLink $active>Participació</NavLink>
            <NavLink>Ajuda</NavLink>
          </Nav>
          <Main>
            <Callout>
              <CalloutBody>
                <HelpCircle>?</HelpCircle>
                <CalloutText>
                  <p>
                    Un <b>procés participatiu</b> és una seqüència d'activitats participatives (p.e. primer omplir una enquesta, després realitzar propostes, debatre-les en<br />
                    trobades presencials o virtuals, i finalment prioritzar-les) amb l'objectiu de definir i prendre una decisió sobre un tema específic.
                  </p>
                  <p>
                    Exemples de processos participatius són: un procés d'elecció de les membres d'un comitè (on primer es presenten unes candidatures, després es<br />
                    debat i finalment s'escull una candidatura), pressupostos participatius (on es realitzen propostes, es valoren econòmicament i es voten amb el<br />
                    pressupost disponible), un procés de planificació estratègica, la redacció col<span>·</span>laborativa d'un reglament o norma, el disseny d'un espai urbà o la<br />
                    producció d'un pla de polítiques públiques.
                  </p>
                </CalloutText>
              </CalloutBody>
              <CalloutClose><Cross s={14} w={3.2} c="#fff" /></CalloutClose>
            </Callout>
            <SectionHeading>PROCESSOS DESTACATS</SectionHeading>
            <Card>
              <div>
                <CardTitle>Formació en cooperativisme</CardTitle>
                <CardLead>Procés d<span>’</span>integració i homologació de materials vinculats a la formació</CardLead>
              </div>
              <CardButton>
                <ButtonTitle>PARTICIPA</ButtonTitle>
                <ButtonNote>Fase actual: Enquesta</ButtonNote>
              </CardButton>
            </Card>
          </Main>
        </Page>
        <Scrollbar>
          <ScrollTop>
            <ScrollArrow $h={21}><svg width="10" height="6" viewBox="0 0 10 6" fill="#a3a3a3"><path d="m0 6 5-6 5 6z" /></svg></ScrollArrow>
            <ScrollThumb />
          </ScrollTop>
          <ScrollArrow $h={23}><svg width="10" height="6" viewBox="0 0 10 6" fill="#505050"><path d="m0 0 5 6 5-6z" /></svg></ScrollArrow>
        </Scrollbar>
      </Viewport>

      <Shelf>
        {downloads.map((d, i) => (
          <Download key={i} $gap={d.gap} $w={d.width} $edge={d.edge}>
            <WordDoc />
            <DownloadName>{d.name}</DownloadName>
            <ChevronUp />
          </Download>
        ))}
        <ShowAll>Mostra-ho tot</ShowAll>
        <ShelfClose><Cross s={13} w={2} c="#6a6e72" /></ShelfClose>
      </Shelf>

      <Taskbar>
        <TaskSlot $w={60}>
          <TaskIcon><svg width="20" height="20" viewBox="0 0 20 20" fill="#fff"><path d="M0 3l8.500-1.200v7.700H0zM9.300 1.600 20 0v9.500H9.300zM0 10.300h8.500V18L0 16.900zM9.300 10.300H20V20L9.300 18.300z" /></svg></TaskIcon>
        </TaskSlot>
        <TaskSearch>
          <svg width="21" height="21" viewBox="0 0 21 21" fill="none" stroke="#222" strokeWidth="1.600"><circle cx="13" cy="7.500" r="6.500" /><path d="M8.500 12.300.8 20" /></svg>
          Escriu aquí per cercar
        </TaskSearch>
        <TaskSlot $w={60}>
          <TaskIcon><svg width="20" height="20" viewBox="0 0 20 20"><circle cx="10" cy="10" r="8.500" fill="none" stroke="#fff" strokeWidth="2.300" /></svg></TaskIcon>
        </TaskSlot>
        <TaskSlot $w={60}>
          <TaskIcon><svg width="21" height="20" viewBox="0 0 21 20" fill="none" stroke="#fff" strokeWidth="1.300"><path d="M1 6h12v8H1zM1 0v3h12V0M1 20v-3h12v3M19 0v4.500M19 11v9" /><path d="M17.500 6h3v3h-3z" fill="#fff" stroke="none" /></svg></TaskIcon>
        </TaskSlot>
        <TaskSlot $w={4} />
        <TaskSlot $w={62}><TaskIcon><Outlook /></TaskIcon><Running $w={51} $multi /></TaskSlot>
        <TaskSlot $w={62}><TaskIcon><Folder /></TaskIcon><Running $w={51} $multi /></TaskSlot>
        <TaskSlot $w={62}><TaskIcon><Edge /></TaskIcon><Running $w={51} /></TaskSlot>
        <TaskSlot $w={62}><TaskIcon><Mail /></TaskIcon></TaskSlot>
        <TaskSlot $w={62}><TaskIcon><FaDropbox size={31} color="#fff" /></TaskIcon></TaskSlot>
        <TaskSlot $w={62}><TaskIcon><SLogo /></TaskIcon></TaskSlot>
        <TaskSlot $w={61} $active><TaskIcon><Chrome /></TaskIcon><Running $w={61} /></TaskSlot>
        <TaskSlot $w={62}><TaskIcon><Word /></TaskIcon><Running $w={51} /></TaskSlot>
        <Tray>
          <TrayItem $w={39.4}><HelpBadge /></TrayItem>
          <TrayItem $w={28.6}><svg width="17" height="9" viewBox="0 0 17 9"><path d="M.6 8.500 8.500.8l7.900 7.700" fill="none" stroke="#fff" strokeWidth="1.300" /></svg></TrayItem>
          <TrayItem $w={31.4}><Cloud /></TrayItem>
          <TrayItem $w={27.6}>
            <svg width="14" height="21" viewBox="0 0 14 21"><rect x="2.500" width="9" height="15" rx="1.500" fill="#fff" /><path d="M.7 10v4.500c0 1.500 1 2.500 2.500 2.500h7.600c1.500 0 2.500-1 2.500-2.500V10M7 17v3M3.500 20.200h7" fill="none" stroke="#fff" strokeWidth="1.200" /></svg>
          </TrayItem>
          <TrayItem $w={33.4}>
            <svg width="20" height="14" viewBox="0 0 20 14" fill="none" stroke="#fff" strokeWidth="1.300"><path d="M5 4h12.500v8.500H4V8" /><path d="M7 6h8.500v4.500H6V7z" fill="#fff" stroke="none" /><path d="M18.500 6.500h1v3h-1M1 0v2.500M4 0v2.500M.5 2.800h4v2l-1 1h-2l-1-1zM2.500 6v6.500H5" strokeWidth="1.100" /></svg>
          </TrayItem>
          <TrayItem $w={28.6}>
            <svg width="16" height="16" viewBox="0 0 16 16" fill="none" strokeWidth="1.200"><path d="M1 15.500A14.500 14.500 0 0 1 15.500.8M4.300 15.500A11 11 0 0 1 15.500 4.300" stroke="#a9b1bd" /><path d="M7.500 15.500a8 8 0 0 1 8-7.700M10.700 15.500a4.800 4.800 0 0 1 4.800-4.500" stroke="#fff" /><circle cx="14.300" cy="14.300" r="1.500" fill="#fff" /></svg>
          </TrayItem>
          <TrayItem $w={29.4}>
            <svg width="20" height="17" viewBox="0 0 20 17" fill="none" stroke="#fff" strokeWidth="1.200"><path d="M.6 5.500H3L7 2v13L3 11.500H.6z" /><path d="M10 6c1.300 1.500 1.300 3.500 0 5" /><path d="M13 4c2.300 2.500 2.300 6.500 0 9M16 1.500c4 4 4 10 0 14" stroke="#6d788a" /></svg>
          </TrayItem>
          <Clock>15:25<br />5/5/2021</Clock>
          <TrayItem $w={50.6}>
            <svg width="21" height="21" viewBox="0 0 21 21"><path d="M.5.500h19.500v15.500H12v4l-4-4H.5z" fill="#fff" /><path d="M4 4.500h12.500M4 8h12.500M4 11.500h8" stroke="#1a2742" strokeWidth="1.300" /><circle cx="15.500" cy="15.500" r="4.700" fill="#fff" stroke="#1a2742" /><path d="M16 12c2 3 0 6-4 5.500" stroke="#1a2742" strokeWidth="1.200" fill="none" /></svg>
          </TrayItem>
          <TrayItem $w={9.7} />
          <ShowDesktop />
        </Tray>
      </Taskbar>
    </Screen>
  );
}
